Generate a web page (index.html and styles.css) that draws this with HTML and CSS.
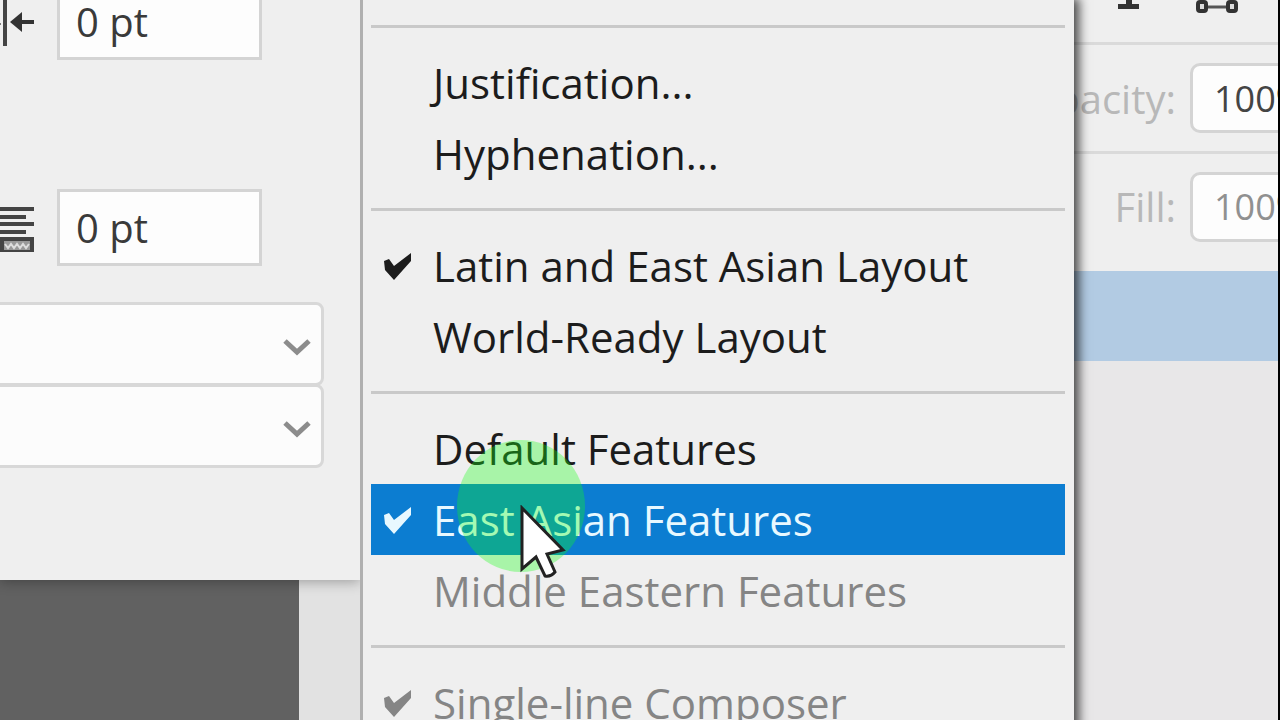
FILE: index.html
```html
<!DOCTYPE html>
<html lang="en">
<head>
  <meta charset="UTF-8">
  <meta name="viewport" content="width=device-width, initial-scale=1.0">
  <title>Paragraph Panel Menu</title>
  <link rel="stylesheet" href="styles.css">
</head>
<body>
  <!-- Shared icons -->
  <svg class="defs" width="0" height="0" aria-hidden="true">
    <symbol id="check" viewBox="0 0 30 28">
      <path d="M1 9L6 7L11 14L28 1V9L11 28L2 18Z" fill="currentColor"/>
    </symbol>
    <symbol id="chevron" viewBox="0 0 28 18">
      <path d="M2 3 L14 14 L26 3" fill="none" stroke="currentColor" stroke-width="5"/>
    </symbol>
  </svg>

  <main class="app">
    <div class="left">
      <!-- Paragraph Panel -->
      <section class="paragraph-panel">
        <div class="fields">
          <div class="field">
            <svg width="36" height="48" viewBox="0 0 36 48" aria-hidden="true">
              <path d="M5 0V48" stroke="#444" stroke-width="4"/>
              <path d="M18 24H34" stroke="#333" stroke-width="4"/>
              <path d="M10 24L22 14V34Z" fill="#333"/>
              <circle cx="0" cy="26" r="1" fill="#555"/>
            </svg>
            <input type="text" value="0 pt" aria-label="Indent right margin">
          </div>
          <div class="field">
            <svg width="36" height="48" viewBox="0 0 36 48" aria-hidden="true">
              <path d="M0 5H34M0 13H26M0 20H34M0 28H26" stroke="#444" stroke-width="4"/>
              <rect x="2" y="35" width="30" height="13" fill="#999" stroke="#444" stroke-width="4"/>
              <path d="M5 40l3 4 3-4 3 4 3-4 3 4 3-4 3 4 3-4" fill="none" stroke="#ddd" stroke-width="2"/>
            </svg>
            <input type="text" value="0 pt" aria-label="Add space after paragraph">
          </div>
        </div>
        <div class="selects">
          <div class="select-box">
            <select aria-label="Kinsoku Shori"><option></option></select>
            <svg width="28" height="18" aria-hidden="true"><use href="#chevron"/></svg>
          </div>
          <div class="select-box">
            <select aria-label="Mojikumi"><option></option></select>
            <svg width="28" height="18" aria-hidden="true"><use href="#chevron"/></svg>
          </div>
        </div>
      </section>
      <div class="workspace">
        <div class="canvas"></div>
      </div>
    </div>

    <!-- Flyout Menu -->
    <div class="menu" role="menu">
      <hr>
      <button type="button" role="menuitem">Justification...</button>
      <button type="button" role="menuitem">Hyphenation...</button>
      <hr>
      <button type="button" role="menuitemradio" aria-checked="true">
        <svg class="check" width="30" height="28" aria-hidden="true"><use href="#check"/></svg>
        Latin and East Asian Layout
      </button>
      <button type="button" role="menuitemradio" aria-checked="false">World-Ready Layout</button>
      <hr>
      <button type="button" role="menuitemradio" aria-checked="false">Default Features</button>
      <button type="button" class="active" role="menuitemradio" aria-checked="true">
        <svg class="check" width="30" height="28" aria-hidden="true"><use href="#check"/></svg>
        East Asian Features
        <span class="click-spot"></span>
        <svg class="pointer" width="46" height="74" viewBox="0 0 46 74" aria-hidden="true">
          <path d="M2 3V64L16 52L25 71Q31 72 35 67L27 49L43 45Z" fill="#fff" stroke="#222" stroke-width="3"/>
        </svg>
      </button>
      <button type="button" role="menuitemradio" aria-checked="false" disabled>Middle Eastern Features</button>
      <hr>
      <button type="button" role="menuitemradio" aria-checked="true" disabled>
        <svg class="check" width="30" height="28" aria-hidden="true"><use href="#check"/></svg>
        Single-line Composer
      </button>
    </div>

    <!-- Layers Panel -->
    <section class="layers">
      <div class="filters">
        <svg width="24" height="14" viewBox="0 0 24 14" aria-hidden="true">
          <path d="M9 0H15V4H22V9H1V4H9Z" fill="#333"/>
        </svg>
        <svg width="44" height="14" viewBox="0 0 44 14" aria-hidden="true">
          <path d="M11 7H33" stroke="#555" stroke-width="3"/>
          <rect x="3" y="2" width="8" height="9" rx="2" fill="#ddd" stroke="#333" stroke-width="4"/>
          <rect x="33" y="2" width="8" height="9" rx="2" fill="#ddd" stroke="#333" stroke-width="4"/>
        </svg>
      </div>
      <div class="setting">
        <label for="opacity">Opacity:</label>
        <input type="text" id="opacity" value="100%">
      </div>
      <div class="setting last">
        <label for="fill">Fill:</label>
        <input type="text" id="fill" class="dim" value="100%">
      </div>
      <div class="layer selected"></div>
    </section>
  </main>
</body>
</html>
```
FILE: styles.css
```css
:root {
  --panel: #efefef;
  --line: #d4d4d4;
  --highlight: #0c7dd1;
  --text: #1c1c1c;
}

* {
  box-sizing: border-box;
}

body {
  margin: 0;
  font-family: "Open Sans", "Noto Sans", sans-serif;
  color: var(--text);
  background: var(--panel);
  overflow: hidden;
}

input, select, button {
  font: inherit;
  color: inherit;
}

.defs {
  position: absolute;
}

.app {
  display: grid;
  grid-template-columns: 9fr 18fr 5fr;
  height: 100vh;
  overflow: hidden;
}

/* Paragraph Panel */
.left {
  display: flex;
  flex-direction: column;
  min-width: 0;
}

.paragraph-panel {
  position: relative;
  padding-bottom: 112px;
  background: var(--panel);
  box-shadow: 0 2px 12px rgba(0, 0, 0, 0.3);
}

.fields {
  display: flex;
  flex-direction: column;
  justify-content: flex-end;
  gap: 129px;
  height: 266px;
  overflow: hidden;
}

.field {
  display: flex;
  align-items: center;
  gap: 21px;
}

.field input {
  width: 205px;
  height: 77px;
  padding: 0 16px;
  font-size: 40px;
  color: #3a3a3a;
  background: #fdfdfd;
  border: 3px solid var(--line);
}

.selects {
  margin: 36px 36px 0 -12px;
}

.select-box {
  position: relative;
}

.select-box + .select-box {
  margin-top: -2px;
}

.select-box select {
  display: block;
  width: 100%;
  height: 84px;
  appearance: none;
  background: #fcfcfc;
  border: 3px solid #d8d8d8;
  border-radius: 8px;
}

.select-box svg {
  position: absolute;
  right: 13px;
  top: 36px;
  color: #8c8c8c;
  pointer-events: none;
}

.workspace {
  flex: 1;
  padding-right: 61px;
  background: #e2e2e2;
}

.canvas {
  height: 100%;
  background: #616161;
}

/* Flyout Menu */
.menu {
  position: relative;
  z-index: 2;
  margin-right: 6px;
  padding: 6px 9px 0 8px;
  background: var(--panel);
  border-left: 3px solid #b0b0b0;
  box-shadow: 3px 0 10px 2px rgba(0, 0, 0, 0.7);
  clip-path: inset(0 -20px 0 0);
}

.menu hr {
  height: 3px;
  margin: 19px 0;
  border: 0;
  background: #c9c9c9;
}

.menu button {
  position: relative;
  display: block;
  width: 100%;
  height: 71px;
  padding: 0 0 0 62px;
  font-size: 42px;
  font-weight: 500;
  line-height: 71px;
  text-align: left;
  white-space: nowrap;
  background: none;
  border: 0;
}

.menu button:disabled {
  color: #858585;
}

.menu .active {
  z-index: 1;
  color: #e8f8ff;
  background: var(--highlight);
}

.check {
  position: absolute;
  left: 12px;
  top: 22px;
}

.click-spot {
  position: absolute;
  left: 86px;
  top: -44px;
  width: 128px;
  height: 132px;
  border-radius: 50%;
  background: rgba(20, 255, 20, 0.32);
  pointer-events: none;
}

.pointer {
  position: absolute;
  left: 149px;
  top: 21px;
  pointer-events: none;
}

/* Layers Panel */
.layers {
  margin-left: -6px;
  overflow: hidden;
  background: #e8e7e8;
  border-right: 2px solid #000;
}

.filters {
  display: flex;
  gap: 54px;
  height: 45px;
  padding-left: 43px;
  background: var(--panel);
  border-bottom: 3px solid #dadada;
}

.setting {
  display: flex;
  align-items: center;
  gap: 14px;
  height: 109px;
  background: var(--panel);
  border-bottom: 3px solid #dadada;
}

.setting.last {
  height: 117px;
  padding-bottom: 12px;
  border-bottom: 0;
}

.setting label {
  display: flex;
  flex: 0 0 102px;
  justify-content: flex-end;
  min-width: 0;
  font-size: 40px;
  color: #b8b8b8;
}

.setting input {
  flex: 0 0 150px;
  height: 70px;
  padding: 0 21px;
  font-size: 36px;
  font-weight: 500;
  color: #444;
  background: #fdfdfd;
  border: 3px solid var(--line);
  border-radius: 10px;
}

.setting .dim {
  color: #909090;
}

.layer {
  height: 90px;
}

.layer.selected {
  background: #b2cbe3;
}
```
